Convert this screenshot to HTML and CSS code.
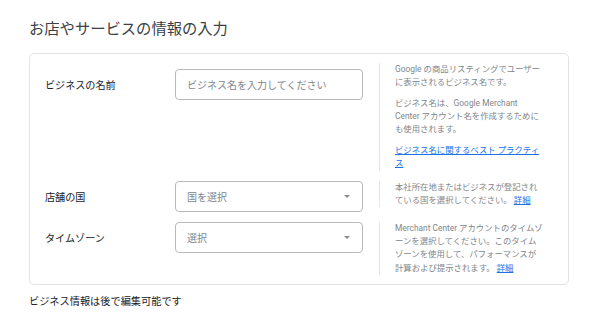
FILE: index.html
```html
<!DOCTYPE html>
<html lang="ja">
<head>
<meta charset="utf-8">
<link rel="stylesheet" href="styles.css">
</head>
<body>
<main class="page">
  <h1 class="title">お店やサービスの情報の入力</h1>
  <section class="card">
    <div class="row row-first">
      <div class="label">ビジネスの名前</div>
      <div class="field">
        <div class="input"><span class="placeholder">ビジネス名を入力してください</span></div>
      </div>
      <div class="help">
        <p>Google の商品リスティングでユーザー<br>に表示されるビジネス名です。</p>
        <p>ビジネス名は、Google Merchant<br>Center アカウント名を作成するために<br>も使用されます。</p>
        <p><a class="link" href="#">ビジネス名に関するベスト プラクティ<br>ス</a></p>
      </div>
    </div>
    <div class="row">
      <div class="label">店舗の国</div>
      <div class="field">
        <div class="input select"><span class="placeholder">国を選択</span><span class="arrow"></span></div>
      </div>
      <div class="help">
        <p>本社所在地またはビジネスが登記され<br>ている国を選択してください。 <a class="link" href="#">詳細</a></p>
      </div>
    </div>
    <div class="row">
      <div class="label">タイムゾーン</div>
      <div class="field">
        <div class="input select"><span class="placeholder">選択</span><span class="arrow"></span></div>
      </div>
      <div class="help">
        <p>Merchant Center アカウントのタイムゾ<br>ーンを選択してください。このタイム<br>ゾーンを使用して、パフォーマンスが<br>計算および提示されます。 <a class="link" href="#">詳細</a></p>
      </div>
    </div>
  </section>
  <p class="footer">ビジネス情報は後で編集可能です</p>
</main>
</body>
</html>
```

FILE: styles.css
```css
* { box-sizing: border-box; }
html, body { margin: 0; padding: 0; background: #ffffff; }
body {
  font-family: Roboto, "Noto Sans CJK JP", "Noto Sans", sans-serif;
  color: #202124;
  text-spacing-trim: space-all;
}
.page {
  padding: 19px 0 0 29px;
}
.title {
  margin: 0;
  font-size: 15.3px;
  line-height: 20px;
  font-weight: 400;
  color: #3c4043;
}
.card {
  margin-top: 14px;
  width: 540px;
  border: 1px solid #e2e3e5;
  border-radius: 5px;
  padding: 9px 0 9px 15px;
  display: flex;
  flex-direction: column;
  gap: 10px;
}
.row {
  display: grid;
  grid-template-columns: 130px 188px auto;
  align-items: start;
}
.label {
  height: 31px;
  display: flex;
  align-items: center;
  font-size: 10.1px;
  font-weight: 400;
  color: #202124;
}
.row-first .label,
.row-first .field {
  margin-top: 6px;
}
.input {
  height: 31px;
  border: 1px solid #b8babd;
  border-radius: 4px;
  display: flex;
  align-items: center;
  padding: 0 12px 0 11px;
}
.select { justify-content: space-between; }
.placeholder {
  font-size: 10px;
  color: #80868b;
}
.arrow {
  width: 0;
  height: 0;
  border-left: 3px solid transparent;
  border-right: 3px solid transparent;
  border-top: 3px solid #8a8d91;
}
.help {
  margin-left: 16px;
  border-left: 1px solid #e6e7e8;
  padding-left: 15px;
  width: 176px;
  font-size: 8.4px;
  line-height: 13.3px;
  color: #80868b;
  white-space: nowrap;
}
.help p { margin: 0; }
.help p + p { margin-top: 7.3px; }
.link { color: #1a73e8; text-decoration: underline; }
.footer {
  margin: 10px 0 0;
  font-size: 10.2px;
  line-height: 14px;
  color: #202124;
}
```
